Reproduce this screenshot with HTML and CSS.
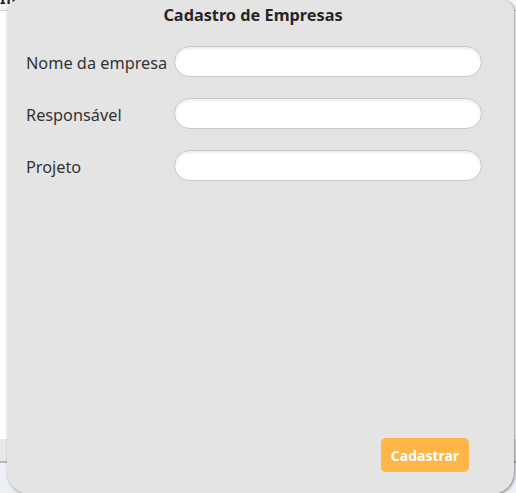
FILE: index.html
```html
<!DOCTYPE html>
<html lang="pt-BR">
<head>
<meta charset="utf-8">
<title>Cadastro de Empresas</title>
<link rel="stylesheet" href="styles.css">
</head>
<body>
<div class="backdrop">
  <div class="bd-top"><span class="bd-text">Inic</span></div>
  <div class="bd-fill"></div>
  <div class="bd-band"></div>
  <div class="bd-bottom"></div>
</div>
<div class="modal">
  <h1 class="title">Cadastro de Empresas</h1>
  <form class="form">
    <label class="label" for="nome">Nome da empresa</label>
    <input class="field" id="nome" type="text">
    <label class="label" for="resp">Responsável</label>
    <input class="field" id="resp" type="text">
    <label class="label" for="proj">Projeto</label>
    <input class="field" id="proj" type="text">
  </form>
  <div class="spacer"></div>
  <button class="btn" type="button">Cadastrar</button>
</div>
</body>
</html>
```
FILE: styles.css
```css
* { box-sizing: border-box; }
html, body { margin: 0; padding: 0; height: 100%; overflow: hidden; }
body {
  background: #ffffff;
  font-family: "Noto Sans", "Open Sans", sans-serif;
  color: #333;
  position: relative;
}
.backdrop {
  display: flex;
  flex-direction: column;
  height: 100%;
}
.bd-top {
  height: 11px;
  border-bottom: 1px solid #cfcfcf;
  background: #f4f4f4;
  overflow: hidden;
}
.bd-text {
  display: block;
  margin-top: -11px;
  font: bold 14px "Noto Sans", sans-serif;
  color: #222;
  letter-spacing: 1px;
}
.bd-fill { flex: 0 0 428px; background: #fff; }
.bd-band { flex: 0 0 24px; background: #e8e8e8; border-bottom: 2px solid #b8b8b8; }
.bd-bottom { flex: 1; background: #eef0f7; }

.modal {
  position: absolute;
  left: 7px;
  top: 0;
  width: 507px;
  height: 494px;
  background: #e4e4e4;
  border-radius: 12px 12px 22px 22px;
  box-shadow: 1px 1px 3px rgba(0,0,0,0.45);
  display: flex;
  flex-direction: column;
  padding: 4px 32px 22px 19px;
}
.title {
  margin: 0;
  font-size: 16.3px;
  font-weight: 700;
  line-height: 22px;
  text-align: center;
  color: #262626;
  padding-right: 2px;
}
.form {
  margin-top: 20px;
  display: grid;
  grid-template-columns: 148px 308px;
  row-gap: 21px;
  align-items: center;
}
.label {
  font-size: 16.3px;
  color: #333;
  white-space: nowrap;
  padding-top: 2px;
}
.field {
  height: 31px;
  border: 1px solid #c8c8c8;
  border-radius: 16px;
  background: #fff;
  box-shadow: inset 0 2px 3px rgba(0,0,0,0.08);
  outline: none;
  font: inherit;
  padding: 0 14px;
}
.spacer { flex: 1; }
.btn {
  align-self: flex-end;
  margin-right: 13px;
  width: 88px;
  height: 34px;
  border: none;
  border-radius: 5px;
  background: #ffb547;
  color: #fff;
  font-family: "Noto Sans", sans-serif;
  font-size: 14px;
  font-weight: 700;
  cursor: pointer;
}
```
